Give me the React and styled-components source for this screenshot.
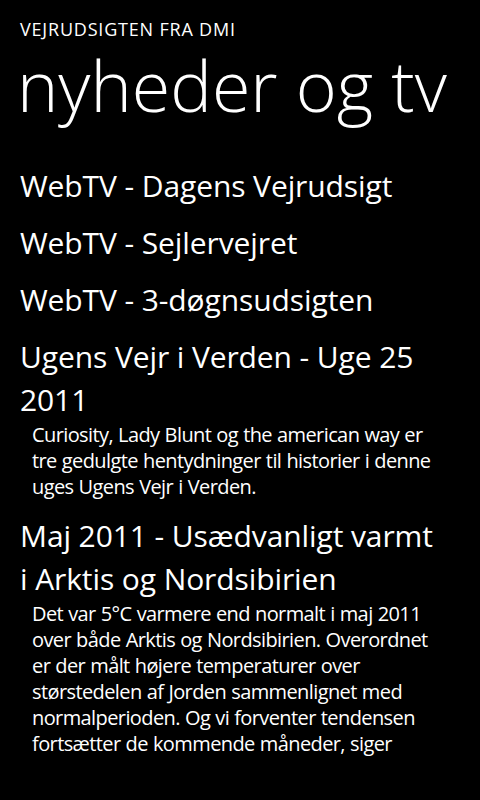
import React from "react";
import styled, { createGlobalStyle } from "styled-components";

const Global = createGlobalStyle`
  html, body { margin: 0; padding: 0; background: #000; }
  body { color: #fff; font-family: "Open Sans", "Noto Sans", sans-serif; }
`;

const Page = styled.div`
  width: 480px;
  height: 800px;
  overflow: hidden;
  background: #000;
  color: #fff;
  display: flex;
  flex-direction: column;
`;

const AppName = styled.div`
  font-size: 18px;
  line-height: 24px;
  padding: 17px 0 0 20px;
  letter-spacing: 0.8px;
`;

const PageTitle = styled.h1`
  margin: 0;
  font-weight: 300;
  font-size: 70px;
  line-height: 76px;
  padding: 6px 0 0 17px;
  letter-spacing: 0px;
`;

const List = styled.div`
  display: flex;
  flex-direction: column;
  padding: 41px 0 0 20px;
`;

const Item = styled.div`
  margin-bottom: 14px;
`;

const Title = styled.div`
  font-size: 30px;
  line-height: 43px;
  font-weight: 400;
  letter-spacing: -0.1px;
`;

const Body = styled.div`
  font-size: 20px;
  line-height: 26px;
  padding: 1px 0 0 12px;
  letter-spacing: -0.6px;
  word-spacing: 0.5px;
`;

const items = [
  { title: ["WebTV - Dagens Vejrudsigt"] },
  { title: ["WebTV - Sejlervejret"] },
  { title: ["WebTV - 3-døgnsudsigten"] },
  {
    title: ["Ugens Vejr i Verden - Uge 25", "2011"],
    body: [
      "Curiosity, Lady Blunt og the american way er",
      "tre gedulgte hentydninger til historier i denne",
      "uges Ugens Vejr i Verden.",
    ],
  },
  {
    title: ["Maj 2011 - Usædvanligt varmt", "i Arktis og Nordsibirien"],
    body: [
      "Det var 5°C varmere end normalt i maj 2011",
      "over både Arktis og Nordsibirien. Overordnet",
      "er der målt højere temperaturer over",
      "størstedelen af Jorden sammenlignet med",
      "normalperioden. Og vi forventer tendensen",
      "fortsætter de kommende måneder, siger",
    ],
  },
];

const lines = (arr) =>
  arr.map((l, i) => (
    <React.Fragment key={i}>
      {i > 0 && <br />}
      {l}
    </React.Fragment>
  ));

export default function App() {
  return (
    <Page>
      <Global />
      <AppName>VEJRUDSIGTEN FRA DMI</AppName>
      <PageTitle>nyheder og tv</PageTitle>
      <List>
        {items.map((it, i) => (
          <Item key={i}>
            <Title>{lines(it.title)}</Title>
            {it.body && <Body>{lines(it.body)}</Body>}
          </Item>
        ))}
      </List>
    </Page>
  );
}
